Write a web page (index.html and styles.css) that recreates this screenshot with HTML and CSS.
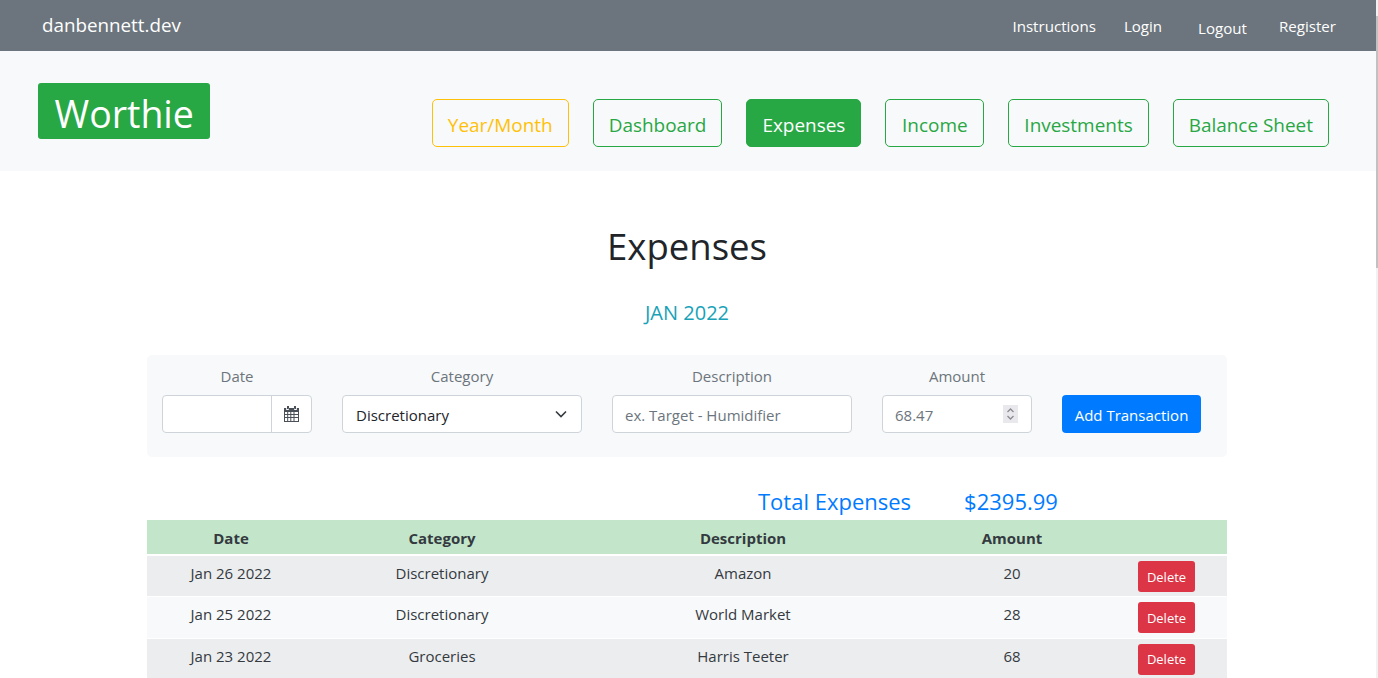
FILE: index.html
```html
<!DOCTYPE html>
<html lang="en">
<head>
    <meta charset="UTF-8">
    <title>Worthie - Expenses</title>
    <link rel="stylesheet" href="styles.css">
</head>
<body>
    <nav class="topbar">
        <a class="brand" href="#">danbennett.dev</a>
        <div class="toplinks">
            <a href="#">Instructions</a>
            <a href="#">Login</a>
            <a class="logout" href="#">Logout</a>
            <a href="#">Register</a>
        </div>
    </nav>

    <header class="jumbo">
        <a class="logo" href="#">Worthie</a>
        <div class="mainnav">
            <a class="btn btn-yellow" href="#">Year/Month</a>
            <a class="btn" href="#">Dashboard</a>
            <a class="btn active" href="#">Expenses</a>
            <a class="btn" href="#">Income</a>
            <a class="btn" href="#">Investments</a>
            <a class="btn" href="#">Balance Sheet</a>
        </div>
    </header>

    <main class="container">
        <h1>Expenses</h1>
        <h2 class="period">JAN 2022</h2>

        <form class="entry">
            <div class="field date-field">
                <label>Date</label>
                <div class="date-group">
                    <input type="text" class="date-input">
                    <span class="date-btn">
                        <svg width="15" height="16" viewBox="0 0 15 16"><path fill="#495057" d="M3 0h2v3H3zM10 0h2v3h-2zM0 2h2.2v2h2.6V2h5.4v2h2.6V2H15v14H0zM1 6v2h2.2V6zm3.2 0v2h2.1V6zm3.1 0v2h2.2V6zm3.2 0v2H14V6zM1 9v2h2.2V9zm3.2 0v2h2.1V9zm3.1 0v2h2.2V9zm3.2 0v2H14V9zM1 12v3h2.2v-3zm3.2 0v3h2.1v-3zm3.1 0v3h2.2v-3zm3.2 0v3H14v-3z" fill-rule="evenodd"/></svg>
                    </span>
                </div>
            </div>
            <div class="field cat-field">
                <label>Category</label>
                <div class="select-box">
                    <span class="value">Discretionary</span>
                    <svg width="12" height="8" viewBox="0 0 12 8"><path fill="none" stroke="#343a40" stroke-width="1.6" d="M1 1.5l5 5 5-5"/></svg>
                </div>
            </div>
            <div class="field desc-field">
                <label>Description</label>
                <input type="text" class="text-input" placeholder="ex. Target - Humidifier">
            </div>
            <div class="field amt-field">
                <label>Amount</label>
                <div class="amount-box">
                    <span class="value">68.47</span>
                    <span class="spinner">
                        <svg width="15" height="18" viewBox="0 0 15 18"><path fill="none" stroke="#8b8b90" stroke-width="1.3" d="M4.5 7l3-3 3 3M4.5 11l3 3 3-3"/></svg>
                    </span>
                </div>
            </div>
            <button type="button" class="add-btn">Add Transaction</button>
        </form>

        <div class="total">
            <span>Total Expenses</span>
            <span>$2395.99</span>
        </div>

        <table class="expenses">
            <thead>
                <tr>
                    <th class="c-date">Date</th>
                    <th class="c-cat">Category</th>
                    <th class="c-desc">Description</th>
                    <th class="c-amt">Amount</th>
                    <th class="c-del"></th>
                </tr>
            </thead>
            <tbody>
                <tr>
                    <td>Jan 26 2022</td>
                    <td>Discretionary</td>
                    <td>Amazon</td>
                    <td>20</td>
                    <td><button type="button" class="del-btn">Delete</button></td>
                </tr>
                <tr>
                    <td>Jan 25 2022</td>
                    <td>Discretionary</td>
                    <td>World Market</td>
                    <td>28</td>
                    <td><button type="button" class="del-btn">Delete</button></td>
                </tr>
                <tr>
                    <td>Jan 23 2022</td>
                    <td>Groceries</td>
                    <td>Harris Teeter</td>
                    <td>68</td>
                    <td><button type="button" class="del-btn">Delete</button></td>
                </tr>
            </tbody>
        </table>
    </main>

    <div class="scrollbar"><div class="thumb"></div></div>
</body>
</html>
```

FILE: styles.css
```css
* {
    box-sizing: border-box;
}
html, body {
    height: 100%;
    overflow: hidden;
}
body {
    margin: 0;
    padding-right: 2px;
    background-color: #fff;
    font-family: "Open Sans", "Noto Sans", sans-serif;
    font-size: 15px;
    color: #212529;
}
a {
    text-decoration: none;
}

.scrollbar {
    position: fixed;
    top: 0;
    right: 0;
    bottom: 0;
    width: 2px;
    padding-top: 16px;
    background-color: #f1f1f1;
}
.thumb {
    height: 252px;
    background-color: #c1c1c1;
}

.topbar {
    height: 51px;
    background-color: #6c757d;
    display: flex;
    align-items: center;
    justify-content: space-between;
    padding: 0 40px 0 42px;
}
.brand {
    margin-top: -2px;
    color: #fff;
    font-size: 18.8px;
}
.toplinks {
    display: flex;
    gap: 28px;
    padding-top: 2px;
}
.toplinks a {
    color: #fff;
    font-size: 15.1px;
}
.toplinks .logout {
    margin: 2px 4px 0 8px;
}

.jumbo {
    height: 120px;
    background-color: #f8f9fa;
    display: flex;
    align-items: flex-start;
    justify-content: space-between;
    padding: 32px 47px 0 38px;
}
.logo {
    height: 56px;
    background-color: #28a745;
    color: #fff;
    font-size: 37.5px;
    line-height: 62px;
    padding: 0 16.5px;
    border-radius: 3px;
}
.mainnav {
    display: flex;
    gap: 24px;
    margin-top: 16px;
}
.btn {
    min-width: 99px;
    height: 48px;
    line-height: 50px;
    padding: 0 15px;
    border: 1px solid #28a745;
    border-radius: 5px;
    color: #28a745;
    font-size: 18.95px;
    text-align: center;
}
.btn-yellow {
    border-color: #ffc107;
    color: #ffc107;
}
.btn.active {
    background-color: #28a745;
    color: #fff;
}

.container {
    width: 1080px;
    margin-left: 147px;
}
h1 {
    margin: 50px 0 0;
    height: 52px;
    line-height: 50px;
    text-align: center;
    font-weight: 400;
    font-size: 36.5px;
}
.period {
    margin: 26px 0 0;
    height: 28px;
    line-height: 28px;
    text-align: center;
    font-weight: 400;
    font-size: 20px;
    color: #17a2b8;
}

.entry {
    margin-top: 28px;
    height: 102px;
    padding: 10px 15px 24px;
    background-color: #f8f9fa;
    border-radius: 5px;
    display: flex;
    align-items: flex-end;
    gap: 30px;
}
.field label {
    display: block;
    height: 30px;
    line-height: 22px;
    text-align: center;
    color: #6c757d;
}
.date-field, .amt-field {
    width: 150px;
}
.cat-field, .desc-field {
    width: 240px;
}
.date-group {
    height: 38px;
    display: flex;
    background-color: #fff;
    border: 1px solid #ced4da;
    border-radius: 4px;
}
.date-input {
    width: 108px;
    height: 36px;
    border: 0;
    background: transparent;
    outline: none;
}
.date-btn {
    flex: 1;
    border-left: 1px solid #ced4da;
    display: flex;
    align-items: center;
    justify-content: center;
}
.value {
    padding-top: 2px;
}
.select-box {
    height: 38px;
    padding: 0 14px 0 13px;
    display: flex;
    align-items: center;
    justify-content: space-between;
    background-color: #fff;
    border: 1px solid #ced4da;
    border-radius: 4px;
}
.text-input {
    display: block;
    width: 100%;
    height: 38px;
    padding: 2px 12px 0;
    border: 1px solid #ced4da;
    border-radius: 4px;
    font: inherit;
    color: #495057;
}
.text-input::placeholder {
    color: #6c757d;
    opacity: 1;
}
.amount-box {
    height: 38px;
    padding: 0 13px 0 12px;
    display: flex;
    align-items: center;
    justify-content: space-between;
    background-color: #fff;
    border: 1px solid #ced4da;
    border-radius: 4px;
    color: #6c757d;
}
.spinner {
    display: flex;
    background-color: #e9e9ed;
}
.add-btn {
    height: 38px;
    width: 139px;
    padding: 2px 0 0;
    border: 0;
    border-radius: 4px;
    background-color: #007bff;
    color: #fff;
    font: inherit;
}

.total {
    height: 35px;
    margin-top: 28px;
    padding: 0 0 4px 611px;
    display: flex;
    gap: 53px;
    align-items: center;
    color: #007bff;
    font-size: 22px;
}

.expenses {
    width: 100%;
    border-collapse: collapse;
    table-layout: fixed;
    color: #343a40;
}
.expenses th {
    height: 35px;
    padding: 2px 0 0;
    background-color: #c3e6cb;
    font-weight: 700;
    border-bottom: 2px solid #fff;
}
.c-date { width: 168px; }
.c-cat { width: 254px; }
.c-desc { width: 348px; }
.c-amt { width: 190px; }
.c-del { width: 120px; }
.expenses td {
    height: 41.5px;
    padding: 7px 0 0;
    text-align: center;
    vertical-align: top;
    background-color: #ecedef;
    border-bottom: 1px solid #fff;
}
.expenses tbody tr:nth-child(even) td {
    background-color: #f8f9fa;
}
.del-btn {
    display: block;
    width: 57px;
    height: 31px;
    margin: -2px 0 0 31px;
    padding: 0;
    border: 0;
    border-radius: 3px;
    background-color: #dc3545;
    color: #fff;
    font: inherit;
    font-size: 13px;
}
```
